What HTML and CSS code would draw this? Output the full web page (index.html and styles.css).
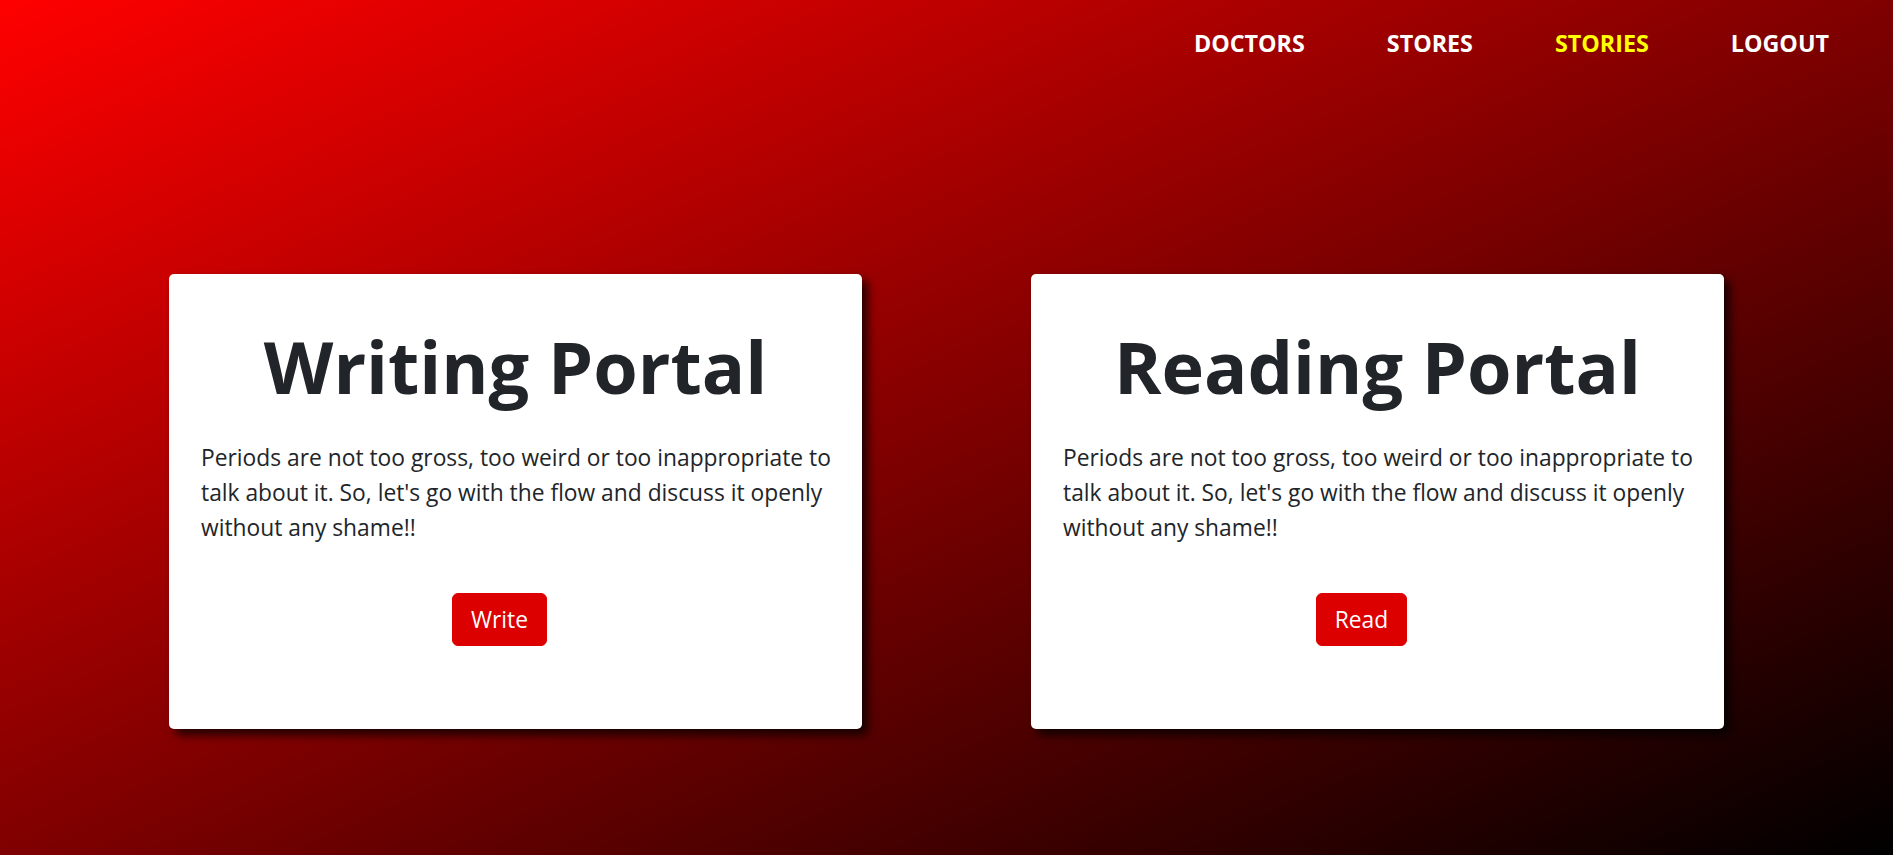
FILE: index.html
```html
<!DOCTYPE html>
<html lang="en">
<head>
<meta charset="utf-8">
<title>Stories</title>
<link rel="stylesheet" href="styles.css">
</head>
<body>
<nav class="topnav">
  <a class="nav-link" href="#">DOCTORS</a>
  <a class="nav-link" href="#">STORES</a>
  <a class="nav-link active" href="#">STORIES</a>
  <a class="nav-link" href="#">LOGOUT</a>
</nav>
<main class="portals">
  <section class="card">
    <h1 class="card-title">Writing Portal</h1>
    <p class="card-text">Periods are not too gross, too weird or too inappropriate to talk about it. So, let's go with the flow and discuss it openly without any shame!!</p>
    <div class="card-action"><a class="btn" href="#">Write</a></div>
  </section>
  <section class="card">
    <h1 class="card-title">Reading Portal</h1>
    <p class="card-text">Periods are not too gross, too weird or too inappropriate to talk about it. So, let's go with the flow and discuss it openly without any shame!!</p>
    <div class="card-action"><a class="btn" href="#">Read</a></div>
  </section>
</main>
</body>
</html>
```
FILE: styles.css
```css
html, body {
  margin: 0;
  padding: 0;
}
body {
  width: 1893px;
  height: 855px;
  overflow: hidden;
  background: linear-gradient(to bottom right, #ff0000, #000000);
  font-family: "Open Sans", "Noto Sans", sans-serif;
  color: #212529;
}
.topnav {
  display: flex;
  justify-content: flex-end;
  gap: 82px;
  padding: 26px 64px 0 0;
  height: 60px;
  box-sizing: border-box;
}
.nav-link {
  color: #ffffff;
  text-decoration: none;
  font-weight: 700;
  font-size: 23.3px;
  line-height: 34px;
}
.nav-link.active {
  color: #ffff00;
}
.portals {
  display: flex;
  justify-content: space-evenly;
  margin-top: 214px;
}
.card {
  width: 693px;
  height: 455px;
  box-sizing: border-box;
  background: #ffffff;
  border-radius: 5px;
  box-shadow: 6px 6px 10px rgba(0, 0, 0, 0.75);
  padding: 44px 32px 0 32px;
}
.card-title {
  margin: 0;
  text-align: center;
  font-size: 72px;
  font-weight: 700;
  line-height: 96px;
}
.card-text {
  margin: 26px -10px 0 0;
  font-size: 22.8px;
  line-height: 35px;
}
.card-action {
  display: flex;
  justify-content: center;
  padding-right: 32px;
  margin-top: 48px;
}
.btn {
  display: inline-block;
  background: #dd0000;
  color: #ffffff;
  text-decoration: none;
  font-size: 22.8px;
  line-height: 35px;
  padding: 8px 18px;
  border: 1px solid #dd0000;
  border-radius: 6px;
}
```
